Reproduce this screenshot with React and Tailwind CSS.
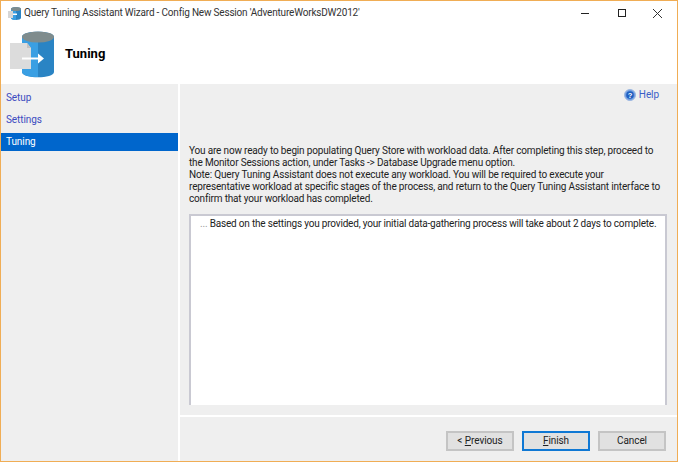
function WizardIcon() {
  return (
    <svg width="45" height="47" viewBox="0 0 45 47">
      <path d="M12 6c0-7 32-7 32 0v35c0 7-32 7-32 0z" fill="#2a84c4" />
      <path d="M12 6c0-3 7-5 16-5v45c-9 0-16-2-16-5z" fill="#3a9fe3" />
      <ellipse cx="28" cy="6" rx="16" ry="5.500" fill="#7f8c8d" />
      <path d="M0 12h17l4 5v21H0z" fill="#dcdcdc" />
      <path d="M17 12l4 5h-4z" fill="#c2c2c2" />
      <path d="M12 27.500h17" stroke="#fff" strokeWidth="2" />
      <path d="M28 22.500l6 5-6 5z" fill="#fff" />
    </svg>
  );
}

function TitleIcon() {
  return (
    <svg width="14" height="15" viewBox="0 0 14 15">
      <path d="M3 3c0-2.500 10-2.500 10 0v9c0 2.500-10 2.500-10 0z" fill="#2a84c4" />
      <path d="M3 3c0-1 2-1.500 5-1.500V14c-3 0-5-.500-5-2z" fill="#3a9fe3" />
      <ellipse cx="8" cy="3" rx="5" ry="2" fill="#7f8c8d" />
      <path d="M0 5h5v7H0z" fill="#d6d6d6" />
      <path d="M5 7.500h4v1.500H5z" fill="#fff" />
    </svg>
  );
}

function HelpIcon() {
  return (
    <svg width="12" height="12" viewBox="0 0 12 12">
      <circle cx="6" cy="6" r="5.500" fill="#6f9be0" stroke="#9db8e0" />
      <circle cx="6" cy="6" r="3.800" fill="#1f5fc0" />
      <text x="6" y="8.500" textAnchor="middle" fontSize="7.500" fontWeight="700" fill="#fff" fontFamily="Liberation Sans, sans-serif">?</text>
    </svg>
  );
}

function NavItem({ label, active }) {
  return (
    <div
      className={`flex h-[18px] items-center pl-[5px] ${
        active ? "bg-[#0066cc] text-white" : "text-[#3b4bc0]"
      }`}
    >
      {label}
    </div>
  );
}

function WizardButton({ children, primary }) {
  return (
    <button
      className={`flex h-[20px] w-[68px] items-center justify-center bg-[#e1e1e1] text-[#222] ${
        primary ? "border-2 border-[#0f78d4]" : "border-2 border-[#c4c4c4]"
      }`}
    >
      {children}
    </button>
  );
}

export default function App() {
  return (
    <div className="flex h-[462px] w-[678px] flex-col overflow-hidden border border-[#f0ad55] bg-white font-['Roboto',sans-serif] text-[10px] leading-[12px] tracking-[-0.08px] text-[#222]">
      {/* Title bar */}
      <div className="flex h-[24px] shrink-0 items-center">
        <div className="ml-[7px] mr-[2px]">
          <TitleIcon />
        </div>
        <span className="tracking-[-0.19px] text-[#333]">Query Tuning Assistant Wizard - Config New Session 'AdventureWorksDW2012'</span>
        <div className="ml-auto flex items-center">
          <div className="flex h-[24px] w-[37px] items-center justify-center">
            <div className="h-px w-[8px] bg-[#222]" />
          </div>
          <div className="flex h-[24px] w-[37px] items-center justify-center">
            <div className="h-[8px] w-[8px] border border-[#222]" />
          </div>
          <div className="flex h-[24px] w-[37px] items-center justify-center pr-[2px]">
            <svg width="9" height="9" viewBox="0 0 9 9">
              <path d="M0 0l9 9M9 0l-9 9" stroke="#333" strokeWidth="1" />
            </svg>
          </div>
        </div>
      </div>

      {/* Header */}
      <div className="flex h-[59px] shrink-0 items-start">
        <div className="ml-[9px] mt-[6px]">
          <WizardIcon />
        </div>
        <div className="ml-[10px] mt-[21px] text-[13px] leading-[16px] font-bold tracking-normal text-black">Tuning</div>
      </div>

      <div className="flex min-h-0 flex-1 bg-[#efefef]">
        {/* Sidebar */}
        <div className="flex w-[177px] shrink-0 flex-col gap-[4px] pt-[5px]">
          <NavItem label="Setup" />
          <NavItem label="Settings" />
          <NavItem label="Tuning" active />
        </div>

        {/* Content */}
        <div className="flex min-w-0 flex-1 flex-col border-l-2 border-white">
          <div className="flex h-[321px] shrink-0 flex-col pl-[9px] pr-[10px]">
            <div className="flex h-[22px] shrink-0 items-center justify-end gap-[3px] pr-[8px] text-[#3b5fc8]">
              <HelpIcon />
              Help
            </div>
            <div className="mt-[39px] whitespace-nowrap tracking-[-0.17px]">
              You are now ready to begin populating Query Store with workload data. After completing this step, proceed to
              <br />
              the Monitor Sessions action, under Tasks -&gt; Database Upgrade menu option.
              <br />
              Note: Query Tuning Assistant does not execute any workload. You will be required to execute your
              <br />
              representative workload at specific stages of the process, and return to the Query Tuning Assistant interface to
              <br />
              confirm that your workload has completed.
            </div>
            <div className="mt-[9px] min-h-0 flex-1 whitespace-nowrap border-2 border-b-0 border-[#c9c9d2] bg-white pl-[9px] pt-[2px] tracking-[-0.19px]">
              <span className="text-[#999]">...</span> Based on the settings you provided, your initial data-gathering process will take about 2 days to complete.
            </div>
          </div>
          <div className="mt-[10px] flex flex-1 justify-end gap-[8px] border-t-2 border-white pr-[11px] pt-[14px]">
            <WizardButton>
              &lt;&nbsp;<span className="underline">P</span>revious
            </WizardButton>
            <WizardButton primary>
              <span className="underline">F</span>inish
            </WizardButton>
            <WizardButton>Cancel</WizardButton>
          </div>
        </div>
      </div>
    </div>
  );
}
